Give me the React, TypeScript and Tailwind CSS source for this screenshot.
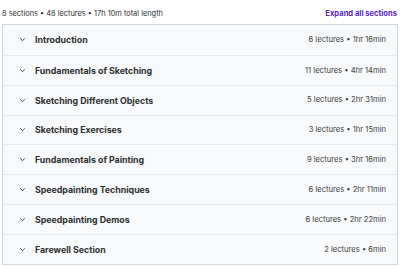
import React from "react";

const sections = [
  ["Introduction", "6 lectures • 1hr 16min"],
  ["Fundamentals of Sketching", "11 lectures • 4hr 14min"],
  ["Sketching Different Objects", "5 lectures • 2hr 31min"],
  ["Sketching Exercises", "3 lectures • 1hr 15min"],
  ["Fundamentals of Painting", "9 lectures • 3hr 16min"],
  ["Speedpainting Techniques", "6 lectures • 2hr 11min"],
  ["Speedpainting Demos", "6 lectures • 2hr 22min"],
  ["Farewell Section", "2 lectures • 6min"],
];

function Chevron() {
  return (
    <svg width="7" height="7" viewBox="0 0 24 24" fill="none" stroke="#2d2f31" strokeWidth="3" strokeLinecap="round" strokeLinejoin="round">
      <path d="M5 9l7 7 7-7" />
    </svg>
  );
}

export default function App() {
  return (
    <div className="w-[400px] h-[267px] bg-white overflow-hidden px-[2px]" style={{ fontFamily: "Inter, 'Noto Sans', sans-serif" }}>
      <div className="flex items-center justify-between h-[24px] pt-[3px] pr-[1px]">
        <span className="text-[7.4px] text-[#2d2f31]">8 sections • 48 lectures • 17h 10m total length</span>
        <span className="text-[7.6px] font-bold text-[#5624d0]">Expand all sections</span>
      </div>
      <div className="border border-[#d1d7dc]">
        {sections.map(([t, m], i) => (
          <div key={i} className={`flex items-center h-[29.85px] bg-[#f7f9fa] pl-[16px] pr-[11px] ${i > 0 ? "border-t border-[#e8ebee]" : ""}`}>
            <Chevron />
            <span className="ml-[9px] text-[8.8px] font-bold text-[#2d2f31]">{t}</span>
            <span className="ml-auto text-[7.6px] text-[#3e4143]">{m}</span>
          </div>
        ))}
      </div>
    </div>
  );
}
